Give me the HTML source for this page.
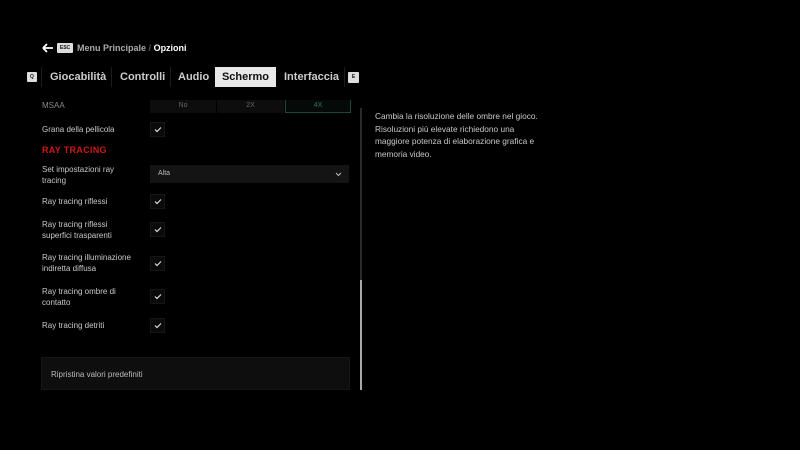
<!DOCTYPE html>
<html><head><style>
body{margin:0;width:800px;height:450px;background:#000;font-family:"Liberation Sans",sans-serif;color:#ddd;overflow:hidden;position:relative}
.a{position:absolute}
.lbl{position:absolute;left:42px;font-size:8px;color:#c8c8c8;line-height:11px}
.cb{position:absolute;left:150px;width:13px;height:13px;background:#0a0a0a;border:1px solid #161616}
.cb svg{position:absolute;left:3px;top:3px}
.tab{position:absolute;top:67px;height:20px;line-height:20px;font-size:11px;font-weight:bold;color:#ccc}
.sep{position:absolute;top:67px;width:1px;height:20px;background:#1c1c1c}
.key{position:absolute;background:#ddd;color:#111;font-size:5px;font-weight:bold;text-align:center;border-radius:1px}
</style></head><body>
<svg class="a" style="left:42px;top:43px" width="12" height="10"><path d="M1 5H11M1 5L5 1M1 5L5 9" stroke="#fff" stroke-width="1.8" fill="none"/></svg>
<div class="key" style="left:57px;top:43px;width:16px;height:10px;line-height:10px">ESC</div>
<div class="a" style="left:77px;top:43px;font-size:9px;font-weight:bold;color:#aaa">Menu Principale <span style="color:#555">/</span> <span style="color:#fff">Opzioni</span></div>
<div class="key" style="left:27px;top:72px;width:10px;height:10px;line-height:10px">Q</div>
<div class="sep" style="left:41px"></div>
<div class="tab" style="left:50px">Giocabilità</div>
<div class="sep" style="left:111px"></div>
<div class="tab" style="left:120px">Controlli</div>
<div class="sep" style="left:170px"></div>
<div class="tab" style="left:178px">Audio</div>
<div class="a" style="left:215px;top:67px;width:61px;height:20px;background:#e8e8e8;color:#111;font-size:11px;font-weight:bold;line-height:20px;text-align:center">Schermo</div>
<div class="tab" style="left:284px">Interfaccia</div>
<div class="sep" style="left:344px"></div>
<div class="key" style="left:348px;top:72px;width:11px;height:11px;line-height:11px">E</div>

<div class="lbl" style="top:100px;color:#888">MSAA</div>
<div class="a" style="left:150px;top:100px;width:66px;height:13px;background:#0d0d0d;color:#666;font-size:7px;text-align:center;line-height:11px">No</div>
<div class="a" style="left:217px;top:100px;width:67px;height:13px;background:#0d0d0d;color:#666;font-size:7px;text-align:center;line-height:11px">2X</div>
<div class="a" style="left:285px;top:100px;width:64px;height:12px;background:#050a08;border:1px solid #1d4a35;border-top:none;color:#2a7a55;font-size:7px;text-align:center;line-height:11px">4X</div>

<div class="lbl" style="top:124px">Grana della pellicola</div>
<div class="cb" style="top:122px"><svg width="8" height="7"><path d="M1 3.5L3 5.5L7 1.5" stroke="#ddd" stroke-width="1.2" fill="none"/></svg></div>
<div class="a" style="left:42px;top:145px;font-size:9px;font-weight:bold;color:#d01818;letter-spacing:.3px">RAY TRACING</div>
<div class="lbl" style="top:164px">Set impostazioni ray<br>tracing</div>
<div class="a" style="left:150px;top:165px;width:199px;height:18px;background:#141414;font-size:7px;color:#bbb;line-height:18px;padding-left:8px;box-sizing:border-box">Alta<svg style="position:absolute;right:7px;top:7px" width="7" height="5"><path d="M1 1L3.5 3.5L6 1" stroke="#bbb" stroke-width="1" fill="none"/></svg></div>

<div class="lbl" style="top:196px">Ray tracing riflessi</div>
<div class="cb" style="top:194px"><svg width="8" height="7"><path d="M1 3.5L3 5.5L7 1.5" stroke="#ddd" stroke-width="1.2" fill="none"/></svg></div>
<div class="lbl" style="top:219px">Ray tracing riflessi<br>superfici trasparenti</div>
<div class="cb" style="top:222px"><svg width="8" height="7"><path d="M1 3.5L3 5.5L7 1.5" stroke="#ddd" stroke-width="1.2" fill="none"/></svg></div>
<div class="lbl" style="top:252px">Ray tracing illuminazione<br>indiretta diffusa</div>
<div class="cb" style="top:256px"><svg width="8" height="7"><path d="M1 3.5L3 5.5L7 1.5" stroke="#ddd" stroke-width="1.2" fill="none"/></svg></div>
<div class="lbl" style="top:286px">Ray tracing ombre di<br>contatto</div>
<div class="cb" style="top:289px"><svg width="8" height="7"><path d="M1 3.5L3 5.5L7 1.5" stroke="#ddd" stroke-width="1.2" fill="none"/></svg></div>
<div class="lbl" style="top:320px">Ray tracing detriti</div>
<div class="cb" style="top:318px"><svg width="8" height="7"><path d="M1 3.5L3 5.5L7 1.5" stroke="#ddd" stroke-width="1.2" fill="none"/></svg></div>

<div class="a" style="left:41px;top:357px;width:309px;height:33px;background:#0e0e0e;border:1px solid #161616;box-sizing:border-box;font-size:8px;color:#bbb;line-height:33px;padding-left:9px">Ripristina valori predefiniti</div>

<div class="a" style="left:360px;top:108px;width:2px;height:282px;background:#2a2a2a"></div>
<div class="a" style="left:360px;top:280px;width:2px;height:110px;background:#aaa"></div>

<div class="a" style="left:375px;top:110px;width:172px;font-size:8.3px;line-height:12.5px;color:#c8c8c8">Cambia la risoluzione delle ombre nel gioco. Risoluzioni più elevate richiedono una maggiore potenza di elaborazione grafica e memoria video.</div>
</body></html>
